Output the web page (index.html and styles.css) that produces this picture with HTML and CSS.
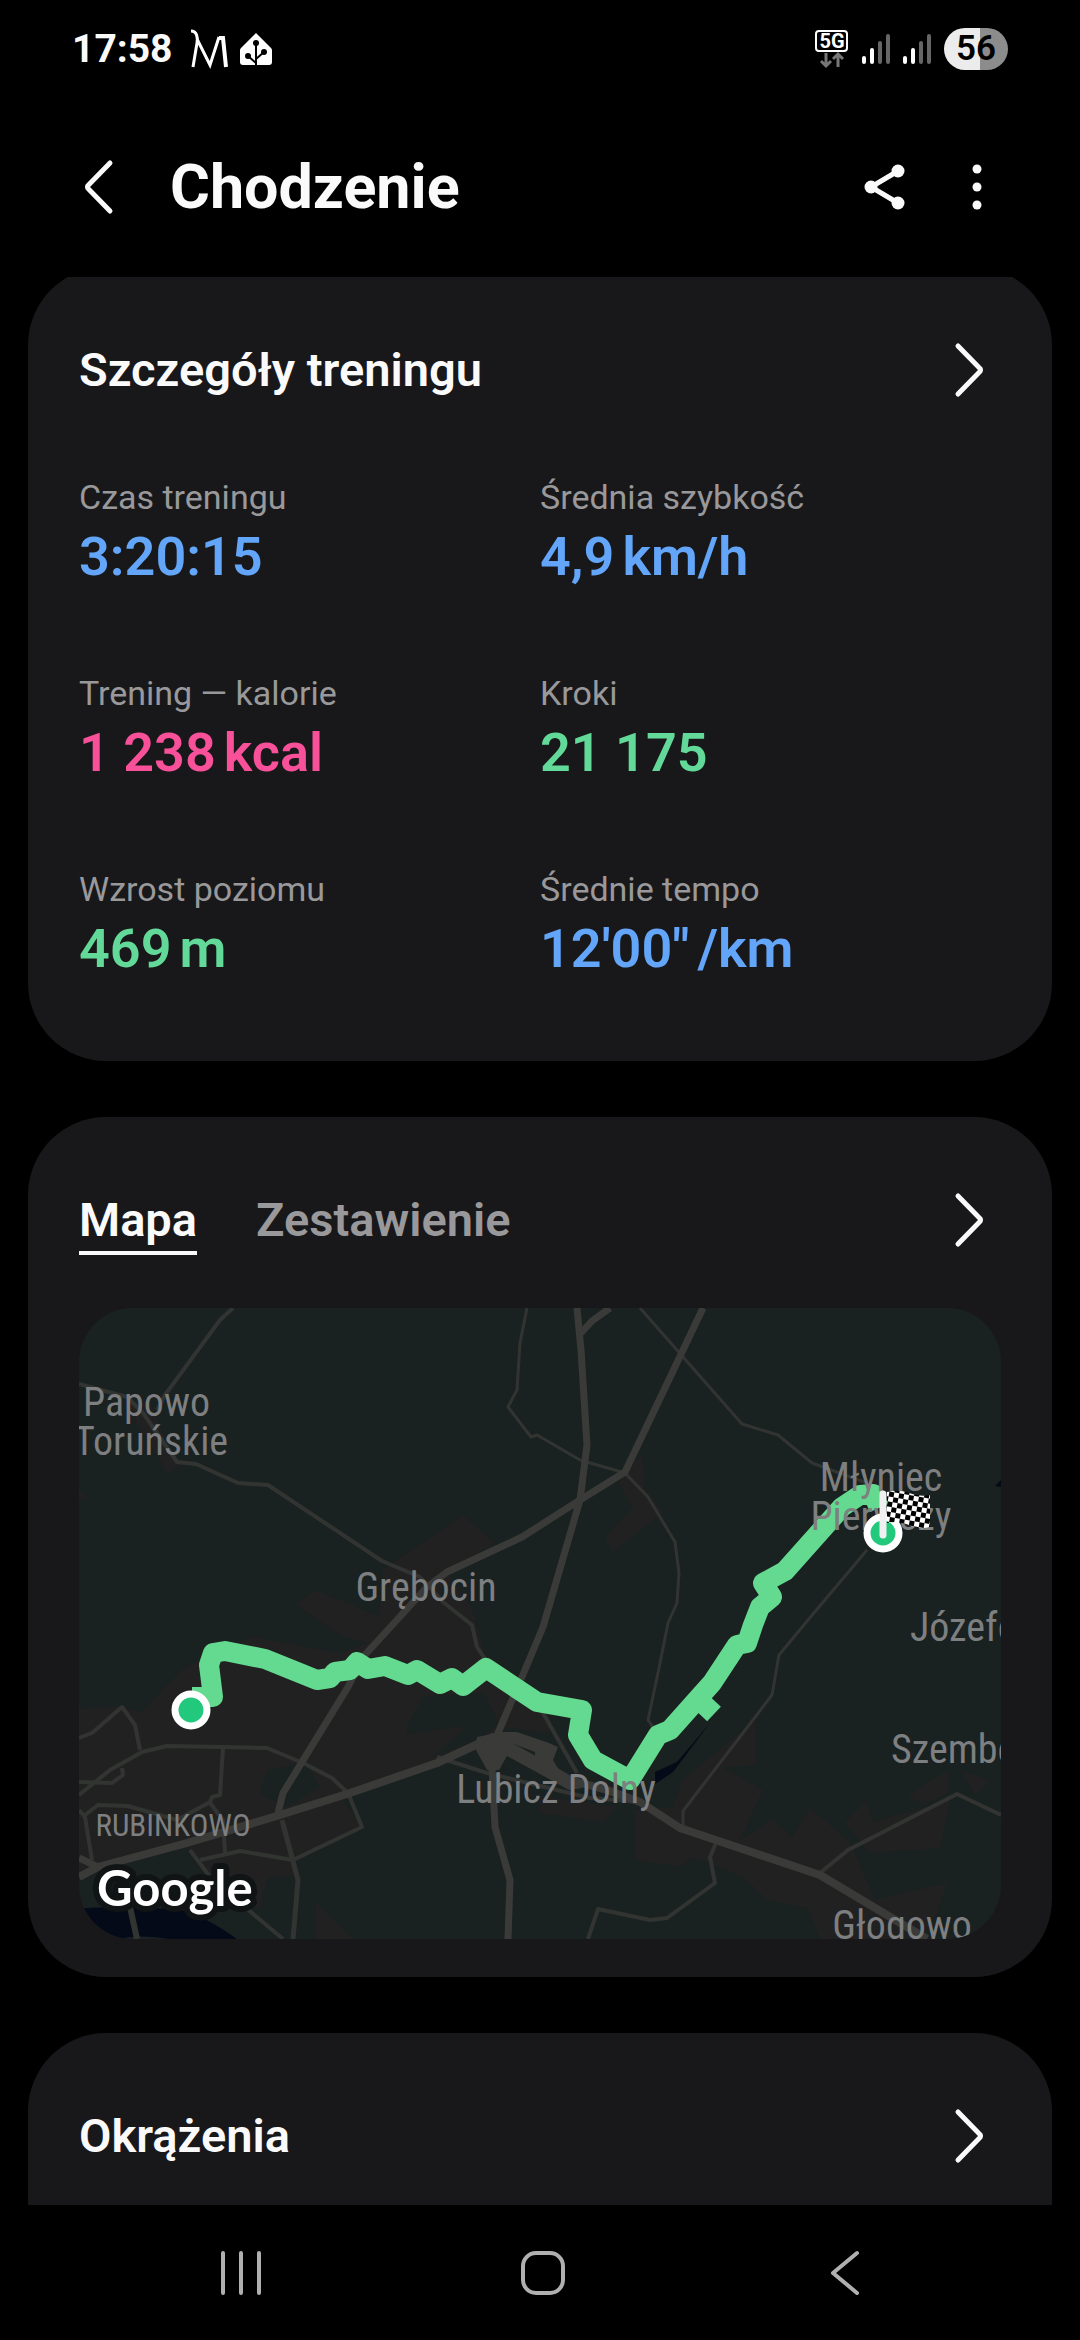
FILE: index.html
```html
<!DOCTYPE html>
<html lang="pl">
<head>
  <meta charset="UTF-8">
  <meta name="viewport" content="width=device-width, initial-scale=1.0">
  <title>Chodzenie</title>
  <link rel="stylesheet" href="styles.css">
</head>
<body>

  <div class="status-bar">
    <div class="status-left">
      <span class="clock">17:58</span>
      <svg class="app-icon" width="40" height="40" viewBox="0 0 40 40" aria-hidden="true">
        <path d="M2 2C8 2 9 9 8 14L4 38M8 10L21 36L30 8" fill="none" stroke="#fff" stroke-width="3"/>
        <path d="M30 9H34L37 38" fill="none" stroke="#fff" stroke-width="4"/>
      </svg>
      <svg width="34" height="34" viewBox="0 0 34 34" aria-hidden="true">
        <path d="M17 1L32 16C33 17 33 18 33 19V30Q33 33 30 33H4Q1 33 1 30V19C1 18 1 17 2 16Z" fill="#fff"/>
        <path d="M17 33V12M17 31L9 24M17 27L25 20" stroke="#000" stroke-width="2" fill="none"/>
        <circle cx="17" cy="11" r="3"/><circle cx="9" cy="24" r="3"/><circle cx="25" cy="20" r="3"/>
      </svg>
    </div>
    <div class="status-right">
      <svg width="34" height="40" viewBox="0 0 34 40" aria-hidden="true">
        <rect x="1" y="2" width="31" height="20" rx="3" fill="none" stroke="#fff" stroke-width="2"/>
        <text class="net" x="17" y="19" text-anchor="middle">5G</text>
        <path d="M11 24V37M6 32L11 37L16 32M23 38V25M18 30L23 25L28 30" fill="none" stroke="#777" stroke-width="3"/>
      </svg>
      <svg class="signal" width="28" height="32" viewBox="0 0 28 32" aria-hidden="true">
        <path d="M2 25V29M10 17V29" stroke="#fff"/>
        <path d="M18 10V29M26 3V29" stroke="#666"/>
      </svg>
      <svg class="signal" width="28" height="32" viewBox="0 0 28 32" aria-hidden="true">
        <path d="M2 25V29M10 17V29" stroke="#fff"/>
        <path d="M18 10V29M26 3V29" stroke="#666"/>
      </svg>
      <span class="battery">56</span>
    </div>
  </div>

  <header class="header">
    <button class="icon-btn" aria-label="Wstecz">
      <svg width="32" height="56" viewBox="0 0 32 56"><path d="M28 4L6 26.500Q5 28 6 29.500L28 52" class="line"/></svg>
    </button>
    <h1>Chodzenie</h1>
    <button class="icon-btn" aria-label="Udostępnij">
      <svg width="44" height="50" viewBox="0 0 44 50">
        <path d="M35 9L8 25L35 41" fill="none" stroke="#fafafa" stroke-width="5"/>
        <g fill="#fafafa"><circle cx="35" cy="9" r="6.500"/><circle cx="8" cy="25" r="6.500"/><circle cx="35" cy="41" r="6.500"/></g>
      </svg>
    </button>
    <button class="icon-btn" aria-label="Więcej opcji">
      <svg width="12" height="50" viewBox="0 0 12 50" fill="#fafafa"><circle cx="6" cy="7" r="4.500"/><circle cx="6" cy="25" r="4.500"/><circle cx="6" cy="43" r="4.500"/></svg>
    </button>
  </header>

  <main class="content">

    <section class="card details">
      <div class="card-head">
        <h2>Szczegóły treningu</h2>
        <button class="icon-btn" aria-label="Szczegóły treningu">
          <svg width="32" height="60" viewBox="0 0 32 60"><path d="M4 6L26 28.500Q27 30 26 31.500L4 54" class="line"/></svg>
        </button>
      </div>
      <dl class="stats">
        <div><dt>Czas treningu</dt><dd class="blue">3:20:15</dd></div>
        <div><dt>Średnia szybkość</dt><dd class="blue">4,9<span class="unit">km/h</span></dd></div>
        <div><dt>Trening — kalorie</dt><dd class="pink">1 238<span class="unit">kcal</span></dd></div>
        <div><dt>Kroki</dt><dd class="green">21 175</dd></div>
        <div><dt>Wzrost poziomu</dt><dd class="green">469<span class="unit">m</span></dd></div>
        <div><dt>Średnie tempo</dt><dd class="blue">12'00"<span class="unit">/km</span></dd></div>
      </dl>
    </section>

    <section class="card map-card">
      <div class="card-head">
        <div class="tabs">
          <button class="tab active">Mapa</button>
          <button class="tab">Zestawienie</button>
        </div>
        <button class="icon-btn" aria-label="Otwórz mapę">
          <svg width="32" height="60" viewBox="0 0 32 60"><path d="M4 6L26 28.500Q27 30 26 31.500L4 54" class="line"/></svg>
        </button>
      </div>

      <svg class="map" viewBox="0 0 922 631" role="img" aria-label="Mapa trasy">
        <defs>
          <pattern id="check" width="10" height="10" patternUnits="userSpaceOnUse" patternTransform="rotate(10)">
            <rect width="10" height="10" fill="#fff"/>
            <rect width="5" height="5"/><rect x="5" y="5" width="5" height="5"/>
          </pattern>
        </defs>

        <!-- built-up areas -->
        <g fill="#212121">
          <path d="M0 401L40 398L63 404L85 380L105 360L175 328L190 332L260 345L290 335L262 328L218 297L236 282L300 308L304 262L384 207L416 235L368 264L393 300L405 345L470 390L470 425L430 420L400 435L358 455L271 485L201 507L0 569Z"/>
          <path d="M201 507L262 490L283 520L214 552L215 567L188 570L180 602L130 570L108 540Z"/>
          <path d="M237 595L275 631H237Z"/>
          <path d="M648 435L676 412V457L643 459L684 482L661 532L694 511L713 530L731 500L771 534L796 592L868 575L858 605L840 631H741L729 600L688 592L664 569L614 549L601 559L556 552V502L594 499L604 472Z"/>
          <path d="M766 515L787 492L794 514L871 492L861 540L791 545Z"/>
          <path d="M829 487L869 462V485L844 497ZM881 462L911 472L896 487Z"/>
          <path d="M563 145L566 182L584 205L534 244L526 230L554 199L539 175L551 159Z"/>
          <path d="M44 92L71 95L94 152L109 154L88 165L81 152Z"/>
          <path d="M461 505L523 514L538 499L461 488ZM0 182L13 193L0 190Z"/>
          <path d="M788 170H815V195H788Z"/>
        </g>
        <path d="M181 485L188 462L228 455L241 479L208 499ZM328 416L328 426L388 418L362 442L350 450L400 432L420 415L405 385L345 388Z" fill="#1a2121"/>
        <path d="M58 562L110 546L125 570L170 610L200 631H150L90 600L20 590Z" fill="#1a2121"/>

        <!-- water -->
        <path d="M8 600Q60 597 108 603Q135 614 158 631H90Q60 626 40 631H0V600ZM576 464L598 454L631 415L594 464L576 476ZM916 178L922 172V179Z" fill="#050a18"/>

        <!-- minor roads -->
        <g fill="none" stroke="#323432" stroke-width="4" stroke-linejoin="round">
          <path d="M154 0L141 12L86 87L78 102"/>
          <path d="M0 76L48 89L64 105L98 154L117 156L159 175L189 177L303 253L341 269L364 294L393 317L398 339L420 372L464 405L498 465"/>
          <path d="M448 0L441 35L438 82L429 99L452 129L458 127L501 152L546 165L569 189L596 234L600 265L598 295L589 315L579 365L569 412L576 422" stroke-width="3"/>
          <path d="M561 0L663 116L699 127L733 155L788 175" stroke-width="3"/>
          <path d="M788 242L729 312L700 347L693 387L604 503V517" stroke-width="3"/>
          <path d="M0 487L31 462L63 444L88 438L144 439L188 440L224 455L253 470L269 485L283 519L214 552L161 543L121 552"/>
          <path d="M0 430L13 425L43 399L56 417L61 442"/>
          <path d="M144 440L141 487L133 489L131 495L144 512L146 545"/>
          <path d="M0 474L33 475L44 467L43 460"/>
          <path d="M0 502L6 509L13 552M6 507L19 497L49 498L98 512L131 494"/>
          <path d="M111 542L131 569L173 605L204 631"/>
          <path d="M203 512L219 572L214 631" stroke-width="5"/>
          <path d="M51 599L58 631" stroke-width="6"/>
          <path d="M358 449L408 465L511 490L561 494"/>
          <path d="M637 535L631 549L636 575L588 610L571 612L519 601L509 631"/>
          <path d="M741 565L769 542L878 486L922 507"/>
        </g>

        <!-- main roads -->
        <g fill="none" stroke="#3a3b39" stroke-width="7" stroke-linejoin="round">
          <path d="M498 0L502 42L508 137L501 192L464 319L443 369L419 425L413 459L416 519L431 572L429 631"/>
          <path d="M531 0L513 13L502 25"/>
          <path d="M624 0L546 164L501 192L443 229L368 264L348 279L284 349L269 379L204 485L199 505"/>
          <path d="M0 569L19 559L108 535L201 507L271 485L358 455L414 429L474 462L491 472L528 482L561 494L601 520L741 567L848 631" stroke-width="8"/>
          <path d="M0 550L19 559"/>
        </g>
        <path d="M398 429L424 424H438L470 435L479 439L474 452L484 469L504 480L490 482L461 466L428 448L420 462H408L396 440ZM427 433L456 444V451L430 440Z" fill="#3a3b39" fill-rule="evenodd"/>

        <!-- route -->
        <g fill="none" stroke="#64da90" stroke-width="20" stroke-linejoin="round">
          <path d="M113 389L134 389L130 357L134 345L146 343L186 351L238 372L251 370L256 364L271 362L278 354L289 361L306 358L329 367L338 362L361 376L373 370L384 378L407 360L458 394L503 402L499 427L514 452L551 472L579 427L591 422L624 385L633 375L658 337L668 335L674 317L681 299L693 289L684 275L706 263L763 199L781 187L794 186L800 200"/>
          <path d="M618 390L635 406"/>
        </g>

        <g class="places">
          <text x="4" y="108">Papowo</text>
          <text x="-5" y="147">Toruńskie</text>
          <text x="347" y="293" text-anchor="middle">Grębocin</text>
          <text x="802" y="183" text-anchor="middle">Młyniec</text>
          <text x="802" y="222" text-anchor="middle">Pierwszy</text>
          <text x="831" y="333">Józefowo</text>
          <text x="812" y="455">Szembekowo</text>
          <text x="477" y="495" text-anchor="middle">Lubicz Dolny</text>
          <text x="823" y="631" text-anchor="middle">Głogowo</text>
          <text class="district" x="94" y="528" text-anchor="middle">RUBINKOWO</text>
        </g>

        <!-- start and finish -->
        <g fill="#22c97c" stroke="#fff" stroke-width="7">
          <circle cx="112" cy="402" r="16"/>
          <circle cx="804" cy="225" r="16"/>
        </g>
        <path d="M808 184Q820 181 830 185T851 187V219Q840 222 830 217T808 215Z" fill="url(#check)"/>
        <path d="M804 186V227" stroke="#f0f0f0" stroke-width="7" stroke-linecap="round"/>

        <text class="map-logo" x="18" y="598">Google</text>
      </svg>
    </section>

    <section class="card">
      <div class="card-head">
        <h2>Okrążenia</h2>
        <button class="icon-btn" aria-label="Okrążenia">
          <svg width="32" height="60" viewBox="0 0 32 60"><path d="M4 6L26 28.500Q27 30 26 31.500L4 54" class="line"/></svg>
        </button>
      </div>
      <div class="laps"></div>
    </section>

  </main>

  <nav class="nav-bar">
    <button class="icon-btn" aria-label="Ostatnie">
      <svg width="44" height="48" viewBox="0 0 44 48"><path d="M4 4V44M22 4V44M40 4V44"/></svg>
    </button>
    <button class="icon-btn" aria-label="Ekran główny">
      <svg width="48" height="48" viewBox="0 0 48 48"><rect x="4" y="4" width="40" height="40" rx="13"/></svg>
    </button>
    <button class="icon-btn" aria-label="Wstecz">
      <svg width="32" height="48" viewBox="0 0 32 48"><path d="M28 4L4 24L28 44"/></svg>
    </button>
  </nav>

</body>
</html>
```
FILE: styles.css
```css
* {
  box-sizing: border-box;
}
body {
  margin: 0;
  height: 100vh;
  display: flex;
  flex-direction: column;
  overflow: hidden;
  background: #000;
  color: #fafafa;
  font-family: Roboto, "Noto Sans", sans-serif;
}
h1, h2, dl, dd {
  margin: 0;
}
svg {
  display: block;
}
.icon-btn {
  padding: 0;
  border: none;
  background: none;
  cursor: pointer;
}
.line {
  fill: none;
  stroke: #fafafa;
  stroke-width: 5;
  stroke-linecap: round;
}

/* status bar */
.status-bar {
  display: flex;
  justify-content: space-between;
  align-items: center;
  height: 97px;
  padding: 0 72px;
}
.status-left, .status-right {
  display: flex;
  align-items: center;
}
.status-left {
  gap: 10px;
}
.app-icon {
  margin-left: 6px;
}
.clock {
  font-size: 39px;
  font-weight: 700;
}
.status-right {
  gap: 13px;
}
.net {
  fill: #fff;
  font-size: 20px;
  font-weight: 700;
}
.signal {
  stroke-width: 4;
  stroke-linecap: round;
}
.battery {
  width: 64px;
  border-radius: 21px;
  background: linear-gradient(to right, #ececec 56%, #8c8c8c 56%);
  color: #000;
  font-size: 35px;
  font-weight: 600;
  line-height: 42px;
  text-align: center;
}

/* header */
.header {
  display: flex;
  align-items: center;
  gap: 64px;
  height: 180px;
  padding: 0 97px 0 82px;
}
.header h1 {
  flex: 1;
  margin-left: -8px;
  font-size: 61px;
  font-weight: 700;
  line-height: 72px;
}

/* cards */
.content {
  flex: 1;
  display: flex;
  flex-direction: column;
  gap: 56px;
  min-height: 0;
  overflow: hidden;
  padding: 0 28px;
}
.card {
  flex-shrink: 0;
  padding: 76px 51px 80px;
  border-radius: 78px;
  background: #18181a;
}
.details {
  margin-top: -10px;
}
.map-card {
  padding-bottom: 38px;
}
.card-head {
  display: flex;
  justify-content: space-between;
  align-items: center;
  height: 54px;
  padding-right: 15px;
}
h2, .tab {
  font-size: 47px;
  font-weight: 600;
  line-height: 54px;
}
.stats {
  display: grid;
  grid-template-columns: 1fr 1fr;
  row-gap: 82px;
  margin-top: 78px;
}
dt {
  margin-bottom: 6px;
  color: #99999b;
  font-size: 34px;
  line-height: 44px;
}
dd {
  font-size: 54px;
  font-weight: 600;
  line-height: 64px;
}
.unit {
  margin-left: 8px;
}
.blue {
  color: #62a5f9;
}
.pink {
  color: #f9509a;
}
.green {
  color: #62d998;
}
.laps {
  min-height: 240px;
}

/* tabs */
.tabs {
  display: flex;
  gap: 59px;
}
.tab {
  position: relative;
  padding: 0;
  border: none;
  background: none;
  color: #99999b;
  font-family: inherit;
  cursor: pointer;
}
.tab.active {
  color: #fafafa;
}
.tab.active::after {
  content: "";
  position: absolute;
  left: 0;
  right: 0;
  bottom: -8px;
  height: 4px;
  background: #fafafa;
}

/* map */
.map {
  width: 100%;
  height: auto;
  margin-top: 61px;
  border-radius: 54px;
  background: #1a2121;
}
.places {
  fill: #7d7f80;
  font-family: "Roboto Condensed", Roboto, sans-serif;
  font-size: 40px;
}
.district {
  font-size: 31px;
}
.map-logo {
  fill: #fff;
  stroke: #111414;
  stroke-width: 12px;
  stroke-linejoin: round;
  paint-order: stroke;
  font-family: Lato, sans-serif;
  font-size: 49px;
  font-weight: 700;
}

/* navigation bar */
.nav-bar {
  display: grid;
  grid-template-columns: repeat(3, 1fr);
  justify-items: center;
  align-items: center;
  height: 135px;
  padding: 0 84px 0 90px;
}
.nav-bar svg {
  fill: none;
  stroke: #b0b0b0;
  stroke-width: 4;
  stroke-linecap: round;
  stroke-linejoin: round;
}
```
